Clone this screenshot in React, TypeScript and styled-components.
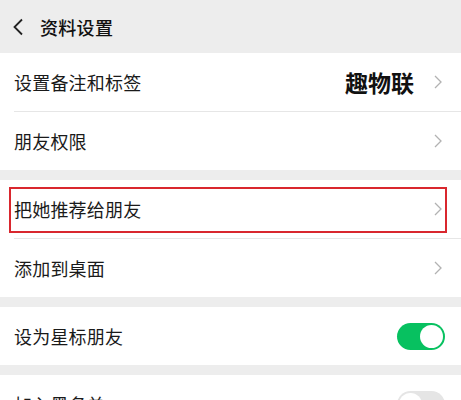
import styled, { createGlobalStyle } from "styled-components";

const GlobalStyle = createGlobalStyle`
  html, body {
    margin: 0;
    padding: 0;
    background: #ededed;
  }
  body {
    font-family: "Noto Sans CJK SC", "Noto Sans", sans-serif;
    color: #1a1a1a;
  }
`;

const Page = styled.div`
  width: 461px;
  height: 400px;
  overflow: hidden;
  background: #ededed;
  display: flex;
  flex-direction: column;
`;

const Header = styled.header`
  height: 53px;
  display: flex;
  align-items: center;
  padding-left: 12px;
  gap: 16px;
  flex-shrink: 0;
`;

const Title = styled.h1`
  margin: 0;
  font-size: 18px;
  font-weight: 500;
  color: #111;
  letter-spacing: 0.3px;
`;

const Group = styled.section<{ $gap?: boolean }>`
  background: #fff;
  margin-top: ${({ $gap }) => ($gap ? "10px" : "0")};
  flex-shrink: 0;
`;

const Row = styled.div<{ $highlight?: boolean }>`
  position: relative;
  height: 58px;
  display: flex;
  align-items: center;
  padding: 0 19px 0 14px;

  & + & {
    border-top: 1px solid #e6e6e6;
    margin-left: 14px;
    padding-left: 0;
  }

  ${({ $highlight }) =>
    $highlight &&
    `
    &::after {
      content: "";
      position: absolute;
      left: 9px;
      right: 14px;
      top: 7px;
      bottom: 5px;
      border: 2px solid #d9272e;
      pointer-events: none;
    }
  `}
`;

const Label = styled.span`
  flex: 1;
  font-size: 18px;
  color: #1a1a1a;
  letter-spacing: 0.2px;
`;

const Brand = styled.span`
  font-size: 23px;
  font-weight: 700;
  color: #111;
  margin-right: 20px;
`;

const Switch = styled.span<{ $on?: boolean }>`
  width: 48px;
  height: 27px;
  border-radius: 14px;
  background: ${({ $on }) => ($on ? "#07c160" : "#e5e5e5")};
  position: relative;
  margin-right: -3px;

  &::after {
    content: "";
    position: absolute;
    top: 2px;
    left: ${({ $on }) => ($on ? "23px" : "2px")};
    width: 23px;
    height: 23px;
    border-radius: 50%;
    background: #fff;
  }
`;

const Chevron = () => (
  <svg width="8" height="14" viewBox="0 0 8 14" fill="none">
    <path d="M1 1l6 6-6 6" stroke="#b2b2b2" strokeWidth="1.3" />
  </svg>
);

const BackIcon = () => (
  <svg width="12" height="18" viewBox="0 0 12 18" fill="none">
    <path d="M10 1.5L2.5 9l7.5 7.5" stroke="#222" strokeWidth="1.8" />
  </svg>
);

const App = () => {
  return (
    <Page>
      <GlobalStyle />
      <Header>
        <BackIcon />
        <Title>资料设置</Title>
      </Header>

      <Group>
        <Row>
          <Label>设置备注和标签</Label>
          <Brand>趣物联</Brand>
          <Chevron />
        </Row>
        <Row>
          <Label>朋友权限</Label>
          <Chevron />
        </Row>
      </Group>

      <Group $gap>
        <Row $highlight>
          <Label>把她推荐给朋友</Label>
          <Chevron />
        </Row>
        <Row>
          <Label>添加到桌面</Label>
          <Chevron />
        </Row>
      </Group>

      <Group $gap>
        <Row>
          <Label>设为星标朋友</Label>
          <Switch $on />
        </Row>
      </Group>

      <Group $gap>
        <Row>
          <Label>加入黑名单</Label>
          <Switch />
        </Row>
      </Group>
    </Page>
  );
};

export default App;
